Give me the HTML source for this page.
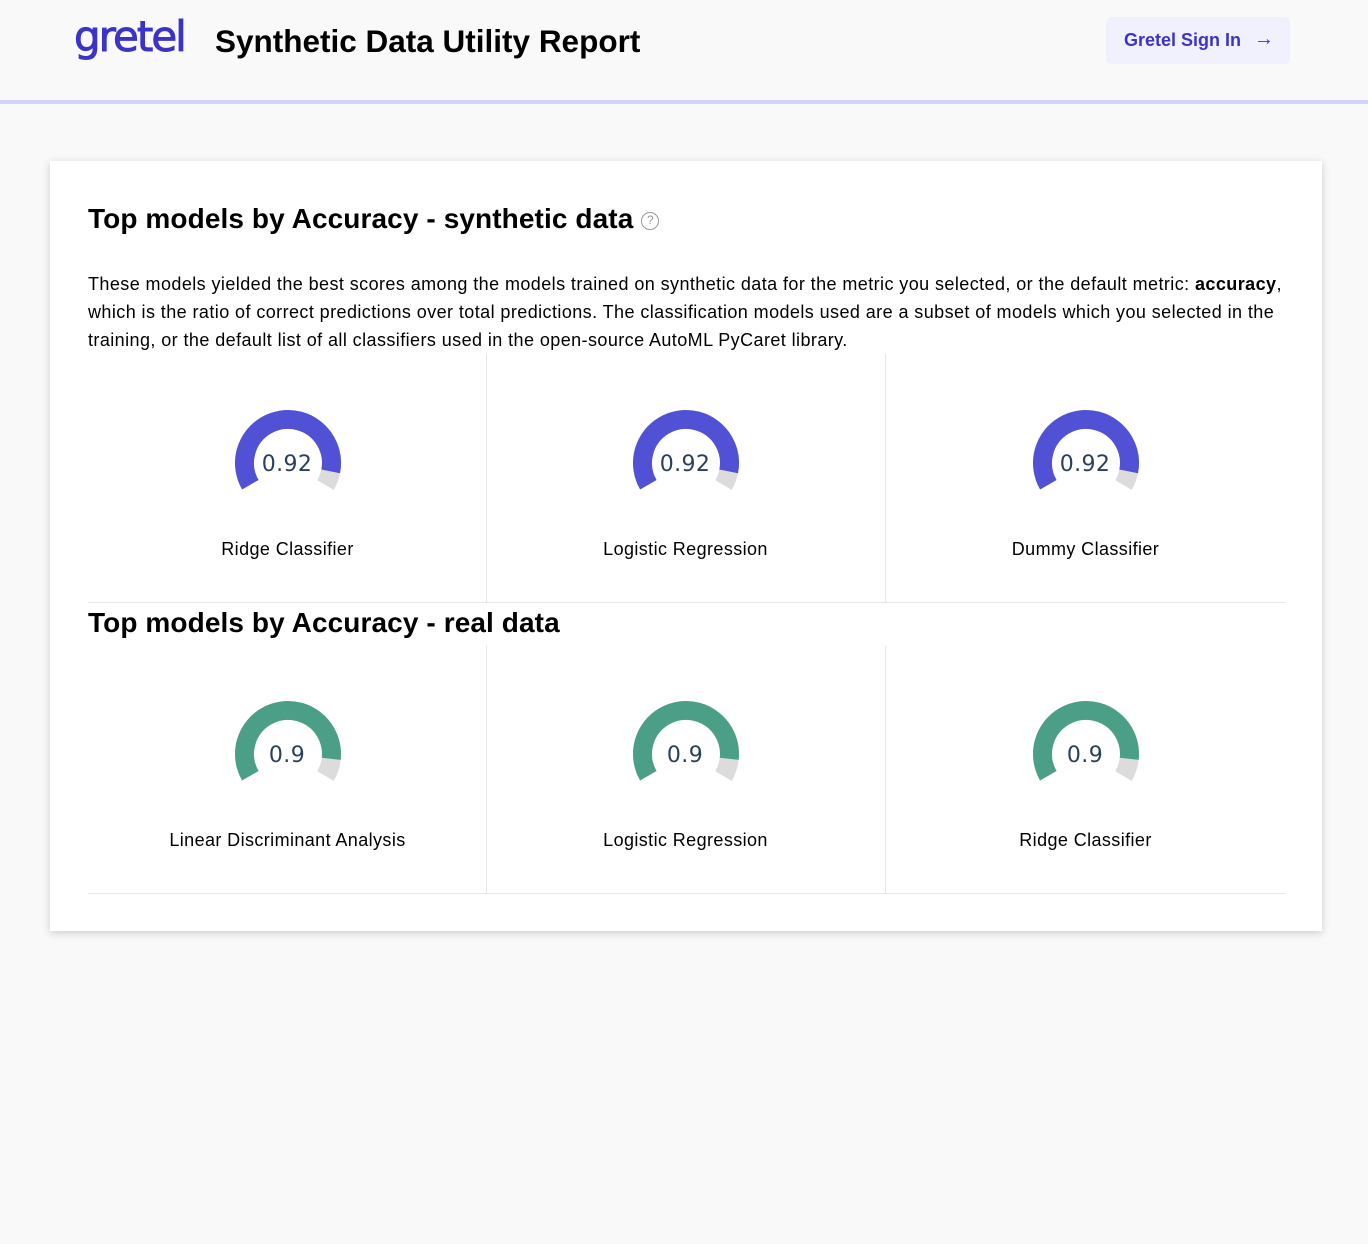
<!DOCTYPE html>
<html><head><meta charset="utf-8"><style>
*{margin:0;padding:0;box-sizing:border-box}
body{width:1368px;height:1244px;background:#f9f9f9;font-family:"Liberation Sans",Arial,sans-serif;position:relative;overflow:hidden;color:#000}
.hdr{position:absolute;left:0;top:0;width:1368px;height:104px;border-bottom:4px solid #d3d3fb;background:#f9f9f9}
.logo{position:absolute;left:74px;top:12px;font-size:42px;color:#3c33c8;font-family:"DejaVu Sans","Liberation Sans",sans-serif;letter-spacing:-2px;-webkit-text-stroke:0.9px #3c33c8}
.title{position:absolute;left:215px;top:23px;font-size:31.5px;font-weight:bold}
.btn{position:absolute;left:1106px;top:17px;width:184px;height:47px;background:#f1f0fd;border-radius:5px;color:#3c33c8;font-weight:bold;font-size:18px;line-height:47px;padding-left:18px}
.btn span{position:absolute;left:148px;top:-1px;font-weight:bold;font-size:20px}
.card{position:absolute;left:50px;top:161px;width:1272px;height:770px;background:#fff;box-shadow:0 2px 8px rgba(0,0,0,.18)}
h2{position:absolute;left:38px;font-size:28px;font-weight:bold;letter-spacing:0.1px}
.q{display:inline-block;width:18px;height:18px;border:1.5px solid #999;border-radius:50%;font-size:12px;color:#999;text-align:center;line-height:15px;font-weight:normal;vertical-align:4px;margin-left:8px}
.p{position:absolute;left:38px;top:109px;width:1220px;font-size:18px;line-height:28px;letter-spacing:0.42px;white-space:nowrap}
.cell{position:absolute;width:399px;text-align:center;font-size:18px;letter-spacing:0.4px}
.cell svg{position:absolute;left:145px}
.lbl{position:absolute;left:0;width:100%}
.vl{position:absolute;width:1px;background:#e5e5e5}
.hl{position:absolute;left:38px;width:1197px;height:1px;background:#e5e5e5}
</style></head><body>
<div class="hdr">
<div class="logo">gretel</div>
<div class="title">Synthetic Data Utility Report</div>
<div class="btn">Gretel Sign In<span>→</span></div>
</div>
<div class="card">
<h2 style="top:42px">Top models by Accuracy - synthetic data<span class="q">?</span></h2>
<div class="p">These models yielded the best scores among the models trained on synthetic data for the metric you selected, or the default metric: <b>accuracy</b>,<br>which is the ratio of correct predictions over total predictions. The classification models used are a subset of models which you selected in the<br>training, or the default list of all classifiers used in the open-source AutoML PyCaret library.</div>
<div class="vl" style="left:436px;top:193px;height:248px"></div>
<div class="vl" style="left:835px;top:193px;height:248px"></div>
<div class="hl" style="top:441px"></div>
<h2 style="top:446px">Top models by Accuracy - real data</h2>
<div class="vl" style="left:436px;top:485px;height:247px"></div>
<div class="vl" style="left:835px;top:485px;height:247px"></div>
<div class="hl" style="top:732px"></div>
</div>
<div class="cell" style="left:88px;top:400px"><svg width="110" height="110" viewBox="0 0 110 110"><circle cx="55" cy="63" r="43.5" fill="none" stroke="#dcdcdc" stroke-width="19" stroke-dasharray="182.2 400" transform="rotate(150 55 63)"/><circle cx="55" cy="63" r="43.5" fill="none" stroke="#5151d6" stroke-width="19" stroke-dasharray="167.6 400" transform="rotate(150 55 63)"/><text x="54" y="71" text-anchor="middle" font-family="DejaVu Sans,sans-serif" font-size="22" fill="#2a3f5f">0.92</text></svg><div class="lbl" style="top:139px">Ridge Classifier</div></div>
<div class="cell" style="left:486px;top:400px"><svg width="110" height="110" viewBox="0 0 110 110"><circle cx="55" cy="63" r="43.5" fill="none" stroke="#dcdcdc" stroke-width="19" stroke-dasharray="182.2 400" transform="rotate(150 55 63)"/><circle cx="55" cy="63" r="43.5" fill="none" stroke="#5151d6" stroke-width="19" stroke-dasharray="167.6 400" transform="rotate(150 55 63)"/><text x="54" y="71" text-anchor="middle" font-family="DejaVu Sans,sans-serif" font-size="22" fill="#2a3f5f">0.92</text></svg><div class="lbl" style="top:139px">Logistic Regression</div></div>
<div class="cell" style="left:886px;top:400px"><svg width="110" height="110" viewBox="0 0 110 110"><circle cx="55" cy="63" r="43.5" fill="none" stroke="#dcdcdc" stroke-width="19" stroke-dasharray="182.2 400" transform="rotate(150 55 63)"/><circle cx="55" cy="63" r="43.5" fill="none" stroke="#5151d6" stroke-width="19" stroke-dasharray="167.6 400" transform="rotate(150 55 63)"/><text x="54" y="71" text-anchor="middle" font-family="DejaVu Sans,sans-serif" font-size="22" fill="#2a3f5f">0.92</text></svg><div class="lbl" style="top:139px">Dummy Classifier</div></div>
<div class="cell" style="left:88px;top:691px"><svg width="110" height="110" viewBox="0 0 110 110"><circle cx="55" cy="63" r="43.5" fill="none" stroke="#dcdcdc" stroke-width="19" stroke-dasharray="182.2 400" transform="rotate(150 55 63)"/><circle cx="55" cy="63" r="43.5" fill="none" stroke="#4c9f87" stroke-width="19" stroke-dasharray="164 400" transform="rotate(150 55 63)"/><text x="54" y="71" text-anchor="middle" font-family="DejaVu Sans,sans-serif" font-size="22" fill="#2a3f5f">0.9</text></svg><div class="lbl" style="top:139px">Linear Discriminant Analysis</div></div>
<div class="cell" style="left:486px;top:691px"><svg width="110" height="110" viewBox="0 0 110 110"><circle cx="55" cy="63" r="43.5" fill="none" stroke="#dcdcdc" stroke-width="19" stroke-dasharray="182.2 400" transform="rotate(150 55 63)"/><circle cx="55" cy="63" r="43.5" fill="none" stroke="#4c9f87" stroke-width="19" stroke-dasharray="164 400" transform="rotate(150 55 63)"/><text x="54" y="71" text-anchor="middle" font-family="DejaVu Sans,sans-serif" font-size="22" fill="#2a3f5f">0.9</text></svg><div class="lbl" style="top:139px">Logistic Regression</div></div>
<div class="cell" style="left:886px;top:691px"><svg width="110" height="110" viewBox="0 0 110 110"><circle cx="55" cy="63" r="43.5" fill="none" stroke="#dcdcdc" stroke-width="19" stroke-dasharray="182.2 400" transform="rotate(150 55 63)"/><circle cx="55" cy="63" r="43.5" fill="none" stroke="#4c9f87" stroke-width="19" stroke-dasharray="164 400" transform="rotate(150 55 63)"/><text x="54" y="71" text-anchor="middle" font-family="DejaVu Sans,sans-serif" font-size="22" fill="#2a3f5f">0.9</text></svg><div class="lbl" style="top:139px">Ridge Classifier</div></div>
</body></html>
